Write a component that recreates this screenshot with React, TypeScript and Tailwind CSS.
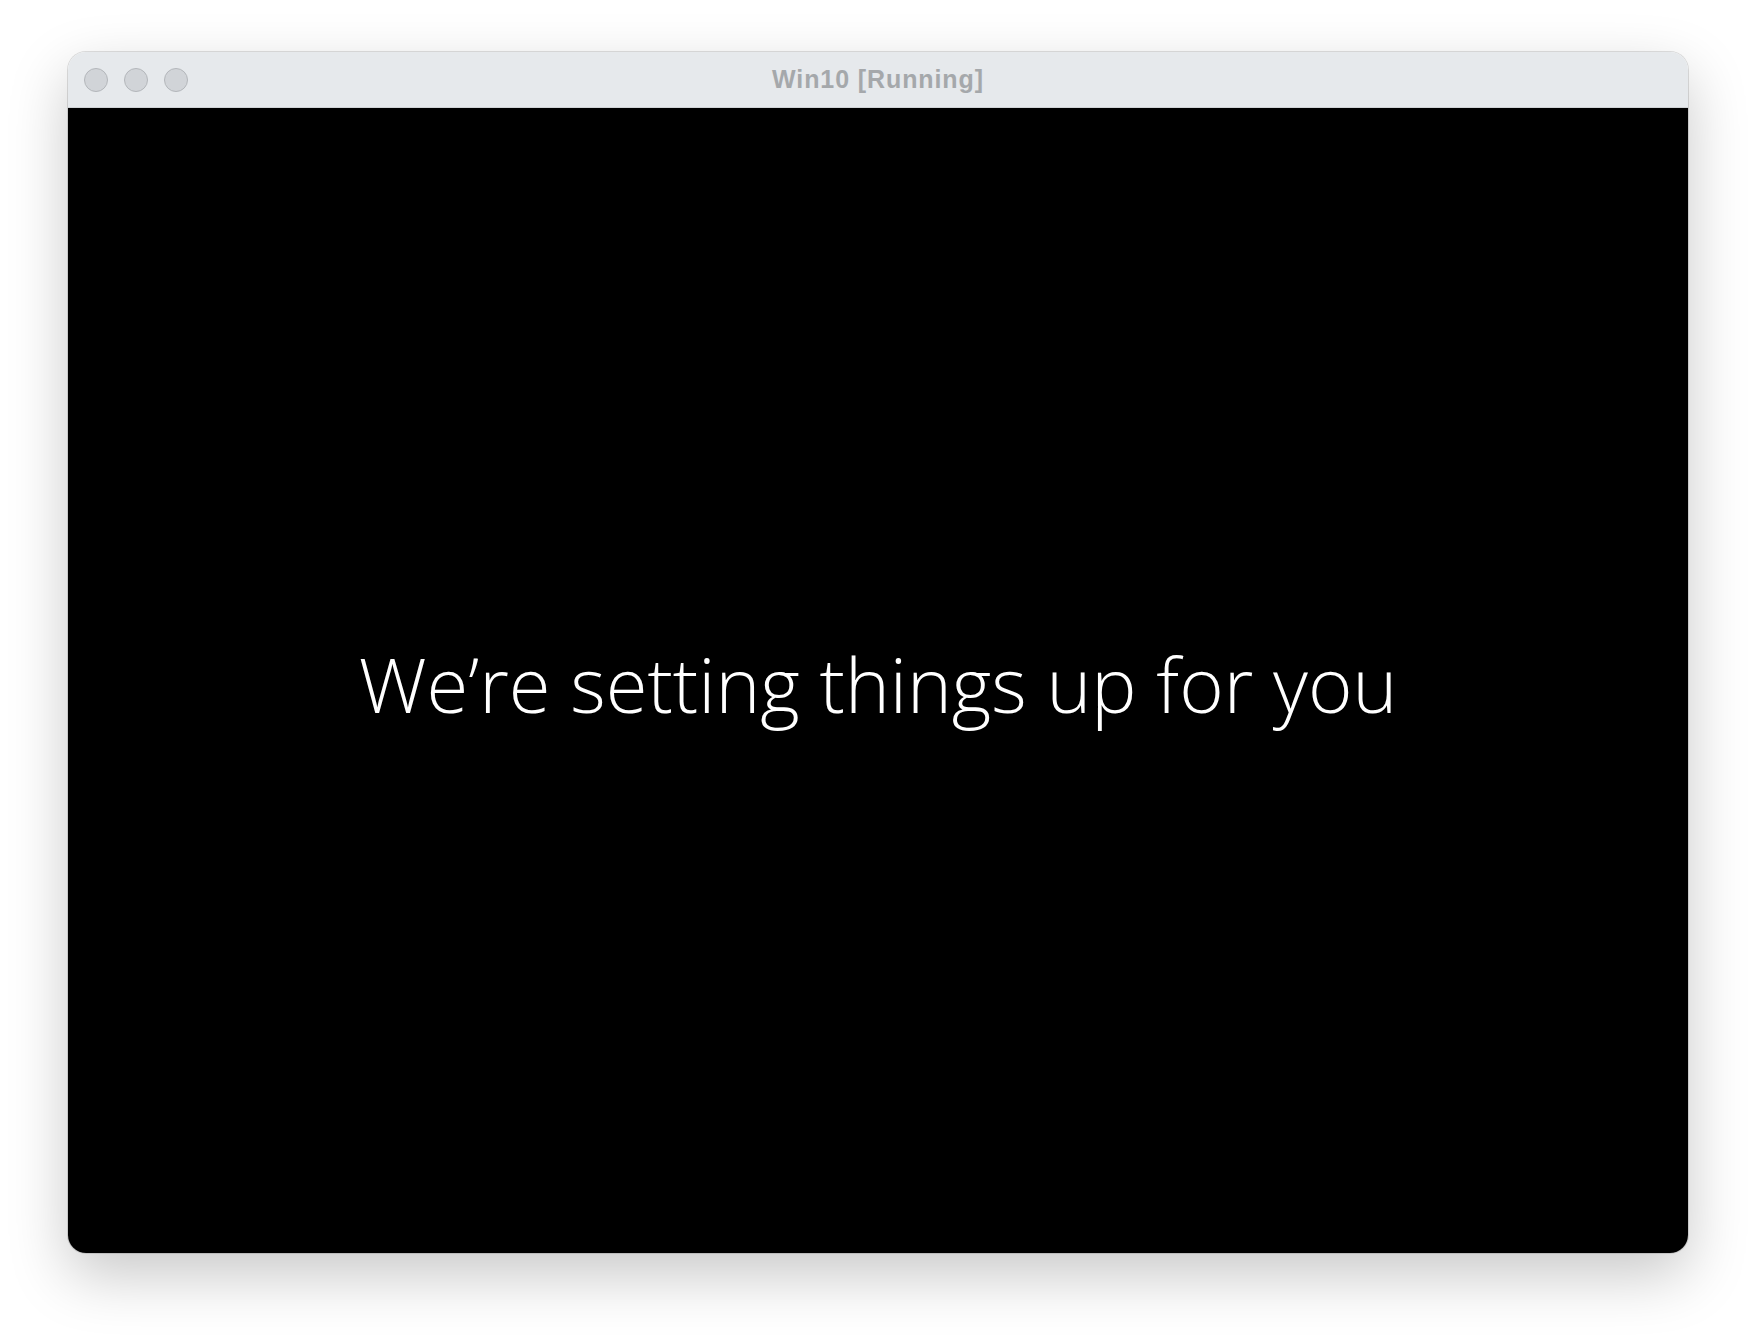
import React from "react";

export default function App() {
  return (
    <div className="w-[1756px] h-[1338px] bg-white overflow-hidden pt-[52px] pl-[68px]">
      <div className="w-[1620px] h-[1201px] rounded-[18px] overflow-hidden flex flex-col shadow-[0_22px_60px_rgba(0,0,0,0.22),0_0_0_1px_rgba(0,0,0,0.12)]">
        <div className="h-[56px] shrink-0 bg-[#e6e9ec] border-b border-[#d0d3d6] relative flex items-center">
          <div className="flex items-center gap-[16px] pl-[16px]">
            <div className="w-[24px] h-[24px] rounded-full bg-[#d1d4d8] border border-[#b3b6ba]" />
            <div className="w-[24px] h-[24px] rounded-full bg-[#d1d4d8] border border-[#b3b6ba]" />
            <div className="w-[24px] h-[24px] rounded-full bg-[#d1d4d8] border border-[#b3b6ba]" />
          </div>
          <div className="absolute inset-0 flex items-center justify-center pointer-events-none">
            <span className="text-[25px] font-bold text-[#a5a8ab] font-['Liberation_Sans',Arial,sans-serif] tracking-[0.9px]">
              Win10 [Running]
            </span>
          </div>
        </div>
        <div className="flex-1 bg-black flex items-center justify-center">
          <span className="text-white font-light text-[76px] leading-none font-['Open_Sans',sans-serif] mt-[6px]">
            We’re setting things up for you
          </span>
        </div>
      </div>
    </div>
  );
}
